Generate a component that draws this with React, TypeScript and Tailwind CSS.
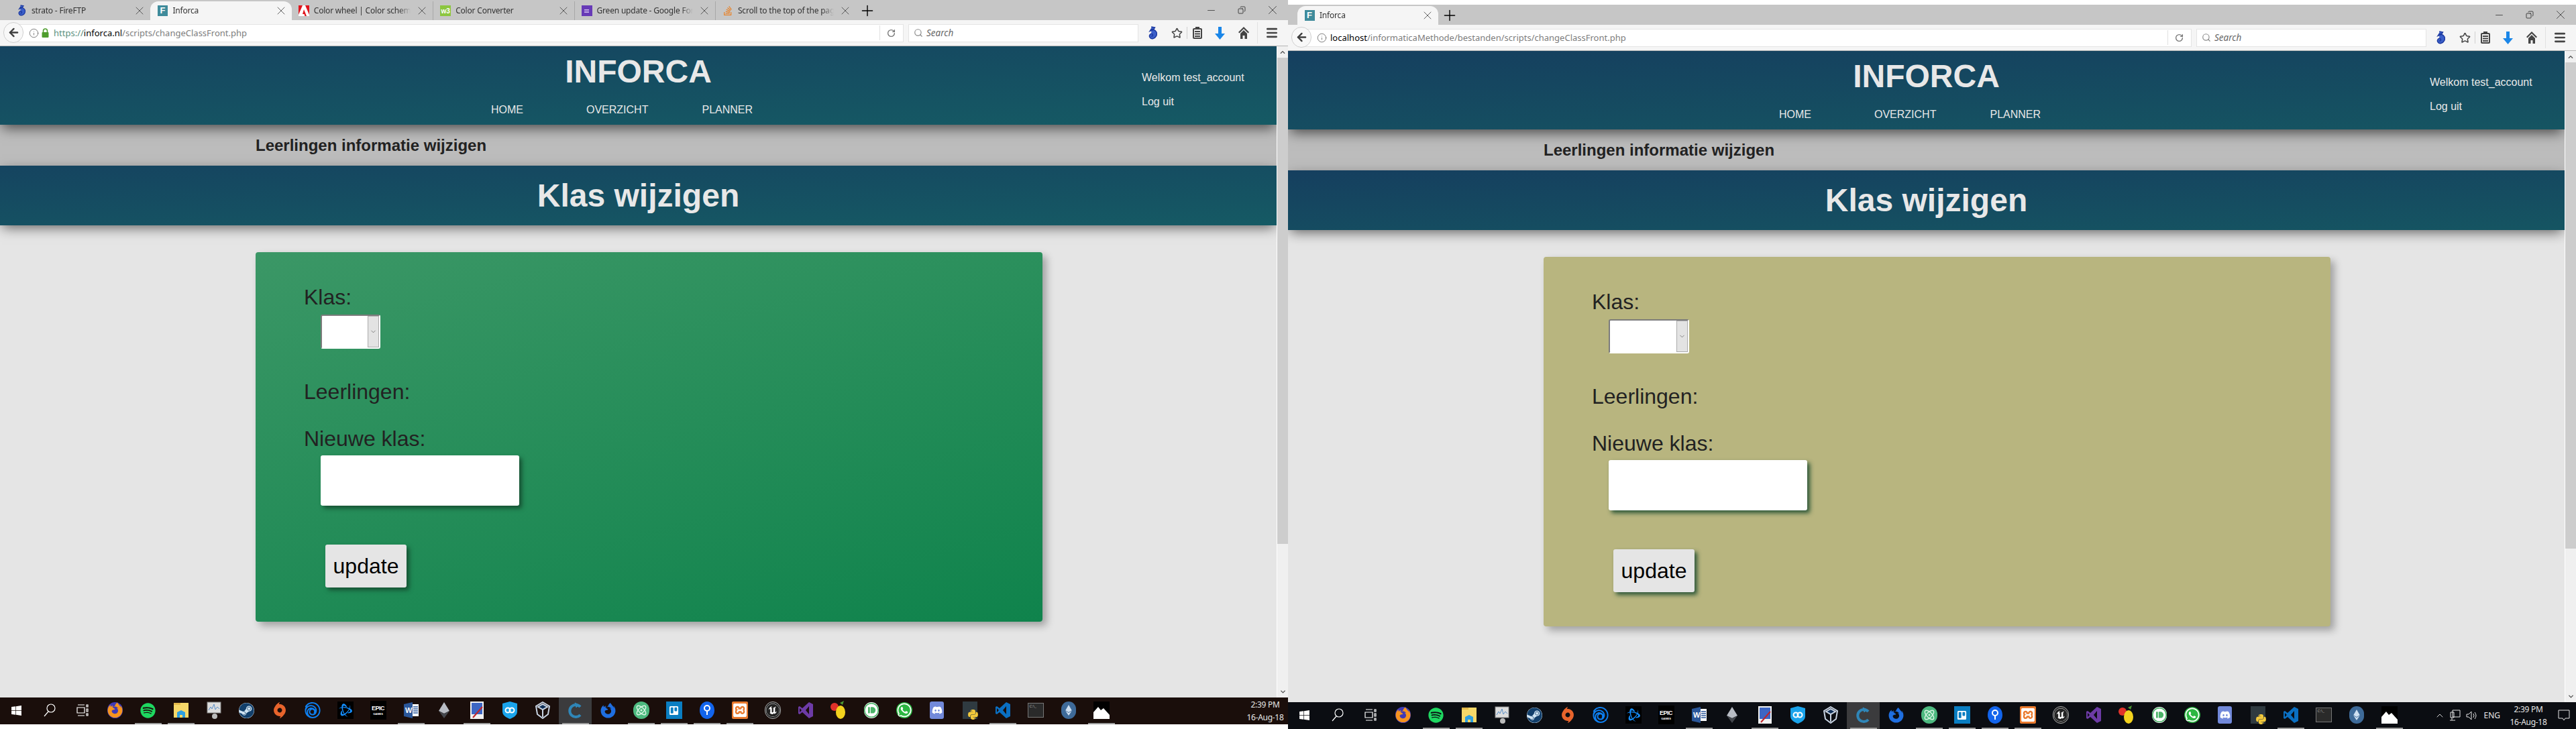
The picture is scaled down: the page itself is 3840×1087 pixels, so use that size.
import type { ReactNode } from "react";
import { ArrowLeft, Atom, ChevronDown, ChevronUp, Copy, Info, Menu, Minus, Plus, RotateCw, Search, Star, X } from "lucide-react";
import {
  FaChevronUp,
  FaDiscord,
  FaEthereum,
  FaFirefoxBrowser,
  FaPython,
  FaSpotify,
  FaStackOverflow,
  FaSteam,
  FaTrello,
  FaWhatsapp,
  FaWindows,
} from "react-icons/fa";
import { SiBattledotnet, SiOrigin, SiPushbullet, SiUbisoft, SiUnrealengine, SiXampp } from "react-icons/si";

function Seahorse({ size = 20 }: { size?: number }) {
  return (
    <svg width={size * 0.7} height={size} viewBox="0 0 14 20">
      <path d="M5 1 L10 2 L8 5 C12 6 14 10 12 14 C10 18 5 19 3 16 C1 13 4 10 6 11 C8 12 7 15 5 14 M8 5 L3 7 L5 4 Z" fill="#3b5fc9" stroke="#1d3aa0" strokeWidth="1.4" />
    </svg>
  );
}

function InforcaIcon() {
  return (
    <span className="w-[15px] h-[16px] bg-[#3f8b9b] text-white text-[13px] font-bold flex items-center justify-center font-['Liberation_Sans',sans-serif]">
      F
    </span>
  );
}

function AdobeIcon() {
  return (
    <svg width="16" height="16" viewBox="0 0 16 16">
      <rect width="16" height="16" fill="#fff" />
      <path d="M0 0h6L0 14zM16 0h-6l6 14zM8 6l4 10H9.5l-1-3H6z" fill="#e0141c" />
    </svg>
  );
}

function TabIcon({ name }: { name: string }) {
  if (name === "seahorse") return <Seahorse size={18} />;
  if (name === "inforca") return <InforcaIcon />;
  if (name === "adobe") return <AdobeIcon />;
  if (name === "w3")
    return (
      <span className="w-[16px] h-[16px] bg-[#8cc63f] text-white text-[10px] font-bold flex items-center justify-center font-['Liberation_Sans',sans-serif]">
        w3
      </span>
    );
  if (name === "forms")
    return (
      <span className="w-[16px] h-[16px] bg-[#673ab7] flex flex-col items-center justify-center gap-[1px]">
        <span className="w-[7px] h-[1px] bg-[#d9c8f2]" />
        <span className="w-[7px] h-[1px] bg-[#d9c8f2]" />
        <span className="w-[7px] h-[1px] bg-[#d9c8f2]" />
      </span>
    );
  return <FaStackOverflow size={16} className="text-[#e8842c]" />;
}

type TabData = { title: string; icon: string; active?: boolean; sep?: boolean };

function Tab({ title, icon, active, sep }: TabData) {
  return (
    <div
      className={`w-[210.4px] h-full flex items-center pl-[10px] pr-[6px] gap-[7px] ${
        active ? "bg-[#f5f5f5] rounded-t-[12px]" : ""
      } ${sep ? "border-l border-[#a8a8a8]" : ""}`}
    >
      <span className="w-[16px] flex justify-center shrink-0">
        <TabIcon name={icon} />
      </span>
      <span className="flex-1 min-w-0 whitespace-nowrap overflow-hidden text-[12px] leading-[18px] text-[#333] tracking-[-0.2px] [mask-image:linear-gradient(to_right,black_88%,transparent_100%)]">
        {title}
      </span>
      <X size={20} strokeWidth={0.9} className="text-[#333] shrink-0" />
    </div>
  );
}

function TabBar({ tabs }: { tabs: TabData[] }) {
  return (
    <div className="h-[30px] bg-[#c6c6c6] flex items-end shrink-0">
      <div className="h-[28px] flex pl-[14px]">
        {tabs.map((t) => (
          <Tab key={t.title} {...t} />
        ))}
      </div>
      <div className="h-[28px] flex items-center ml-[4px] flex-1">
        <Plus size={26} strokeWidth={1.3} className="text-black" />
      </div>
      <div className="h-full flex items-center">
        <span className="w-[46px] flex justify-center">
          <Minus size={17} strokeWidth={1} className="text-[#222]" />
        </span>
        <span className="w-[46px] flex justify-center">
          <Copy size={12} strokeWidth={1.6} className="text-[#222] -scale-x-100" />
        </span>
        <span className="w-[46px] flex justify-center">
          <X size={22} strokeWidth={0.8} className="text-[#222]" />
        </span>
      </div>
    </div>
  );
}

function ClipboardIcon() {
  return (
    <svg width="14" height="18" viewBox="0 0 14 18" fill="none" stroke="#444" strokeWidth="2">
      <rect x="1" y="3" width="12" height="14" rx="1" />
      <path d="M4 1h6M3 7h8M3 10.5h8M3 14h8" />
    </svg>
  );
}

function Toolbar({ url, secure }: { url: ReactNode; secure?: boolean }) {
  return (
    <div className="h-[39px] bg-[#f5f5f5] border-b border-[#b5b5b5] flex items-center shrink-0 relative">
      <div className="ml-[20px] w-[1327px] h-[27px] bg-white border border-[#e4e4e4] flex items-center pl-[22px] pr-[10px]">
        <Info size={15} strokeWidth={1} className="text-[#333] shrink-0 mr-[5px]" />
        {secure && (
          <svg width="11" height="14" viewBox="0 0 11 14" className="shrink-0 mr-[7px] -ml-[1px]">
            <path d="M2.5 6V4a3 3 0 0 1 6 0v2" fill="none" stroke="#4e9d2d" strokeWidth="1.6" />
            <rect x="0.5" y="6" width="10" height="8" rx="1" fill="#4e9d2d" />
          </svg>
        )}
        <span className="flex-1 text-[13px] leading-[18px] text-[#7d7d7d] whitespace-nowrap">{url}</span>
        <span className="h-[22px] border-l border-[#e0e0e0] mr-[10px]" />
        <RotateCw size={13} strokeWidth={2.5} className="text-[#777] mr-[1px]" />
      </div>
      {/* the back button sits over the start of the url bar */}
      <span className="absolute left-[5px] top-[3px] w-[30px] h-[31px] rounded-full bg-[#f8f8f8] border border-[#cfcfcf] flex items-center justify-center">
        <ArrowLeft size={19} strokeWidth={3} className="text-[#3e3e3e]" />
      </span>
      <div className="ml-[7px] w-[343px] h-[27px] bg-white border border-[#e4e4e4] flex items-center pl-[7px] gap-[5px]">
        <Search size={14} strokeWidth={2} className="text-[#8a8a8a]" />
        <span className="text-[13.5px] italic leading-[18px] text-[#666]">Search</span>
      </div>
      <span className="w-[42px] flex justify-center">
        <Seahorse size={21} />
      </span>
      <span className="w-[30px] flex justify-center">
        <Star size={17} strokeWidth={2.2} className="text-[#444]" />
      </span>
      <span className="h-[18px] border-l border-[#d0d0d0]" />
      <span className="w-[30px] flex justify-center">
        <ClipboardIcon />
      </span>
      <span className="w-[36px] flex justify-center">
        <svg width="15" height="19" viewBox="0 0 15 19" fill="#1a86e8">
          <path d="M5 0h5v10h5l-7.5 9L0 10h5z" />
        </svg>
      </span>
      <span className="w-[36px] flex justify-center">
        <svg width="16" height="18" viewBox="0 0 16 18" fill="#444">
          <path d="M8 0l8 8-1.5 1.5L8 3 1.5 9.500 0 8zM8 5l5 5v8H9.500v-5h-3v5H3v-8z" />
        </svg>
      </span>
      <span className="h-[32px] border-l border-[#e2e2e2] ml-[2px]" />
      <span className="w-[42px] flex justify-center">
        <Menu size={20} strokeWidth={3.2} className="text-[#444]" />
      </span>
    </div>
  );
}

function Scrollbar() {
  return (
    <div className="w-[17px] bg-[#f0f0f0] flex flex-col items-center shrink-0 border-l border-white">
      <span className="h-[17px] flex items-center justify-center">
        <FaChevronUp size={8} className="text-[#505050]" />
      </span>
      <div className="w-[16px] h-[725px] bg-[#cdcdcd]" />
      <div className="flex-1" />
      <span className="h-[17px] flex items-center justify-center">
        <ChevronDown size={11} strokeWidth={3} className="text-[#505050]" />
      </span>
    </div>
  );
}

function SelectBox({ width }: { width: string }) {
  return (
    <div className={`${width} h-[51px] ml-[25px] mt-[7px] bg-white rounded-[3px] border-2 border-t-[#7c7c7c] border-l-[#7c7c7c] border-r-white border-b-white flex justify-end`}>
      <div className="w-[17px] h-full bg-[#e3e3e3] border border-[#ababab] flex items-center justify-center">
        <ChevronDown size={11} strokeWidth={1.2} className="text-[#333]" />
      </div>
    </div>
  );
}

type PageProps = {
  card: string;
  selectWidth: string;
  gradient: string;
};

function Page({ card, selectWidth, gradient }: PageProps) {
  return (
    <div className="flex-1 flex min-h-0">
      <div className="flex-1 min-w-0 bg-[#e5e5e5] overflow-hidden font-['Liberation_Sans',Arial,sans-serif]">
        <header className={`relative z-20 h-[117px] ${gradient} shadow-[0_8px_18px_-3px_rgba(0,0,0,0.6)] grid grid-cols-[1fr_501px_1fr] text-[#e8e8e8]`}>
          <div />
          <div className="flex flex-col">
            <h1 className="text-[48px] leading-[55px] font-bold text-center mt-[10px]">INFORCA</h1>
            <nav className="flex text-[16px] leading-[18px] pl-[31px] mt-[21px]">
              <span>HOME</span>
              <span className="ml-[94px]">OVERZICHT</span>
              <span className="ml-[80px]">PLANNER</span>
            </nav>
          </div>
          <div className="pl-[500px] pt-[38px] text-[16px] leading-[18px] whitespace-nowrap">
            <p>Welkom test_account</p>
            <p className="mt-[18px]">Log uit</p>
          </div>
        </header>
        <div className="h-[61px] bg-[#bcbcbc] pl-[381px] flex items-center text-[24px] font-bold text-[#222]">Leerlingen informatie wijzigen</div>
        <div className={`relative z-10 h-[89px] ${gradient} shadow-[0_6px_18px_-3px_rgba(0,0,0,0.6)] flex items-center justify-center text-[48px] font-bold text-[#e8e8e8]`}>
          Klas wijzigen
        </div>
        <section className={`ml-[381px] mt-[40px] w-[1173px] h-[551px] rounded-[4px] ${card} shadow-[6px_6px_12px_rgba(0,0,0,0.3)] pt-[49px] pl-[72px] text-[32px] leading-[37px] text-[#222]`}>
          <p>Klas:</p>
          <SelectBox width={selectWidth} />
          <p className="mt-[46px]">Leerlingen:</p>
          <p className="mt-[33px]">Nieuwe klas:</p>
          <input
            type="text"
            aria-label="Nieuwe klas"
            className="block w-[296px] h-[75px] ml-[25px] mt-[6px] bg-white rounded-[3px] shadow-[4px_4px_6px_rgba(20,70,45,0.85)] outline-none"
          />
          <button
            type="button"
            className="block w-[121px] h-[64px] ml-[32px] mt-[58px] bg-[#e5e5e5] rounded-[3px] text-black shadow-[4px_4px_6px_rgba(20,70,45,0.85)]"
          >
            update
          </button>
        </section>
      </div>
      <Scrollbar />
    </div>
  );
}

function WordIcon() {
  return (
    <svg width="24" height="24" viewBox="0 0 24 24">
      <path d="M1 3l13-3v24L1 21z" fill="#2b579a" />
      <rect x="14" y="3" width="9" height="18" fill="#fff" />
      <path d="M15 7h7M15 10h7M15 13h7M15 16h7" stroke="#2b579a" strokeWidth="1.5" />
      <text x="3" y="16" fontSize="11" fontWeight="700" fill="#fff" fontFamily="Liberation Sans">W</text>
    </svg>
  );
}

function VsIcon({ color }: { color: string }) {
  return (
    <svg width="24" height="26" viewBox="0 0 24 26" fill={color}>
      <path fillRule="evenodd" d="M17 1l6 3v18l-6 3L7 16l-4 3-2-1V8l2-1 4 3zM17 7l-5 6 5 6zM3 10v6l3-3z" />
    </svg>
  );
}

const tasks: { key: string; el: ReactNode; on?: boolean; active?: boolean }[] = [
  { key: "start", el: <FaWindows size={17} className="text-white" /> },
  {
    key: "search",
    el: (
      <svg width="18" height="20" viewBox="0 0 18 20" fill="none" stroke="#fff" strokeWidth="1.2">
        <circle cx="11" cy="7" r="6" />
        <path d="M7 12l-6 7" />
      </svg>
    ),
  },
  {
    key: "taskview",
    el: (
      <svg width="18" height="18" viewBox="0 0 18 18" fill="none" stroke="#fff" strokeWidth="1.2">
        <path d="M2 1h10M2 17h10M1 5h11v8H1zM15 1h2v3h-2zM15 7h2v4h-2zM15 14h2v3h-2z" />
      </svg>
    ),
  },
  {
    key: "firefox",
    el: (
      <span className="w-[23px] h-[24px] rounded-full bg-[#3f3ab5] flex items-center justify-center">
        <FaFirefoxBrowser size={24} className="text-[#f7941e]" />
      </span>
    ),
  },
  { key: "spotify", el: <FaSpotify size={23} className="text-[#1ed760]" />, on: true },
  {
    key: "files",
    el: (
      <svg width="22" height="24" viewBox="0 0 22 24">
        <rect x="0" y="1" width="22" height="22" fill="#f6d869" />
        <rect x="0" y="1" width="10" height="3" fill="#e3b84a" />
        <path d="M5 23v-8l6-3 6 3v8h-4v-4H9v4z" fill="#2d9fe0" />
      </svg>
    ),
    on: true,
  },
  {
    key: "perf",
    el: (
      <svg width="22" height="26" viewBox="0 0 22 26">
        <rect x="1" y="1" width="20" height="16" fill="#ddd" stroke="#888" />
        <path d="M3 13l3-5 2 3 3-7 2 8 3-4 3 3" stroke="#5b8fc7" fill="none" />
        <circle cx="12" cy="22" r="4" fill="#bbb" />
      </svg>
    ),
  },
  { key: "steam", el: <FaSteam size={23} className="text-[#123f6b] bg-[#cfe3f2] rounded-full" /> },
  { key: "origin", el: <SiOrigin size={24} className="text-[#e8642c]" /> },
  { key: "uplay", el: <SiUbisoft size={24} className="text-[#0e7ff0]" /> },
  {
    key: "battle",
    el: (
      <span className="w-[24px] h-[26px] bg-black flex items-center justify-center">
        <SiBattledotnet size={20} className="text-[#148eff]" />
      </span>
    ),
  },
  {
    key: "epic",
    el: (
      <span className="w-[24px] h-[28px] bg-black flex flex-col items-center justify-center text-white font-['Liberation_Sans',sans-serif] font-bold">
        <span className="text-[9px] leading-[11px] tracking-[-0.5px]">EPIC</span>
        <span className="text-[4px] leading-[6px]">GAMES</span>
      </span>
    ),
  },
  { key: "word", el: <WordIcon />, on: true },
  {
    key: "launcher",
    el: (
      <svg width="20" height="24" viewBox="0 0 20 24">
        <path d="M10 0l8 13-8 4-8-4z" fill="#b8bcc4" />
        <path d="M10 17l8-4-8 11-8-11z" fill="#44474d" />
      </svg>
    ),
  },
  {
    key: "paint",
    el: (
      <svg width="20" height="26" viewBox="0 0 20 26">
        <rect width="20" height="26" fill="#f1f1f1" />
        <rect x="2" y="2" width="16" height="17" fill="#3c66c4" />
        <path d="M4 24L18 8" stroke="#c0262b" strokeWidth="2" />
      </svg>
    ),
    on: true,
  },
  {
    key: "shield",
    el: (
      <svg width="22" height="26" viewBox="0 0 22 26">
        <path d="M0 3l11-3 11 3v12c0 6-6 9-11 11C6 24 0 21 0 15z" fill="#1aa4ec" />
        <circle cx="8" cy="13" r="3.5" fill="none" stroke="#fff" strokeWidth="2" />
        <circle cx="14" cy="13" r="3.5" fill="none" stroke="#fff" strokeWidth="2" />
      </svg>
    ),
  },
  {
    key: "vbox",
    el: (
      <svg width="22" height="26" viewBox="0 0 22 26" fill="none" stroke="#c9d4e3" strokeWidth="2">
        <path d="M11 1l10 6-2 12-8 6-8-6L1 7z" />
        <path d="M4 8l7-4 7 4-7 4z" fill="#0f2f58" />
        <path d="M11 12v11" />
      </svg>
    ),
  },
  {
    key: "active",
    el: (
      <svg width="22" height="26" viewBox="0 0 22 26" fill="none" stroke="#2f86b8" strokeWidth="4">
        <path d="M18 8a9 9 0 1 0 0 12" />
        <path d="M10 2l6 3-4 4z" fill="#2f86b8" strokeWidth="1" />
      </svg>
    ),
    active: true,
    on: true,
  },
  { key: "fxdev", el: <FaFirefoxBrowser size={23} className="text-[#1f6ee0]" /> },
  {
    key: "atom",
    el: (
      <span className="w-[24px] h-[26px] rounded-full bg-[#4cb97f] flex items-center justify-center">
        <Atom size={18} className="text-[#d5f3e0]" />
      </span>
    ),
    on: true,
  },
  {
    key: "trello",
    el: (
      <span className="w-[24px] h-[26px] bg-[#0a7ec2] flex items-center justify-center">
        <FaTrello size={15} className="text-white" />
      </span>
    ),
    on: true,
  },
  {
    key: "sourcetree",
    el: (
      <svg width="22" height="26" viewBox="0 0 22 26">
        <ellipse cx="11" cy="13" rx="11" ry="13" fill="#1264ec" />
        <circle cx="11" cy="10" r="4" fill="none" stroke="#fff" strokeWidth="2" />
        <path d="M11 14v6" stroke="#fff" strokeWidth="2" />
      </svg>
    ),
    on: true,
  },
  {
    key: "xampp",
    el: (
      <span className="w-[24px] h-[26px] rounded-[2px] bg-[#ea7a2e] flex items-center justify-center">
        <SiXampp size={20} className="text-white" />
      </span>
    ),
    on: true,
  },
  {
    key: "unreal",
    el: (
      <span className="w-[24px] h-[26px] rounded-full bg-[#222] border border-[#aaa] flex items-center justify-center">
        <SiUnrealengine size={20} className="text-white" />
      </span>
    ),
  },
  { key: "vs", el: <VsIcon color="#6d3ba6" /> },
  {
    key: "fruit",
    el: (
      <svg width="24" height="28" viewBox="0 0 24 28">
        <circle cx="6" cy="9" r="6" fill="#e0322a" />
        <path d="M14 3l6-3-2 6z" fill="#4c9a32" />
        <ellipse cx="15" cy="17" rx="7" ry="10" fill="#f3d21e" />
      </svg>
    ),
  },
  {
    key: "pushbullet",
    el: (
      <span className="w-[22px] h-[24px] rounded-full bg-white flex items-center justify-center">
        <SiPushbullet size={24} className="text-[#4ab367]" />
      </span>
    ),
  },
  { key: "whatsapp", el: <FaWhatsapp size={24} className="text-white bg-[#2cb742] rounded-full" /> },
  {
    key: "discord",
    el: (
      <span className="w-[21px] h-[26px] rounded-[3px] bg-[#7289da] flex items-center justify-center">
        <FaDiscord size={16} className="text-white" />
      </span>
    ),
  },
  {
    key: "pycharm",
    el: (
      <span className="relative w-[22px] h-[26px] bg-[#2f3a40]">
        <FaPython size={17} className="absolute -right-[2px] -bottom-[2px] text-[#f4c93b]" />
      </span>
    ),
  },
  { key: "vscode", el: <VsIcon color="#0a6fc2" />, on: true },
  {
    key: "console",
    el: (
      <span className="w-[24px] h-[22px] bg-[#2a2a2a] border border-[#777] text-[6px] leading-[9px] text-[#aaa] pl-[2px]">C:\_</span>
    ),
  },
  {
    key: "eth",
    el: (
      <span className="w-[22px] h-[26px] rounded-full bg-[#3e6a99] flex items-center justify-center">
        <FaEthereum size={16} className="text-[#cfe0f2]" />
      </span>
    ),
  },
  {
    key: "photo",
    el: (
      <svg width="24" height="26" viewBox="0 0 24 26">
        <rect width="24" height="26" fill="#000" />
        <path d="M0 26V16l7-8 4 5 4-3 9 10v6z" fill="#fff" />
      </svg>
    ),
    on: true,
  },
];

function Clock({ className }: { className: string }) {
  return (
    <div className={`flex flex-col items-center justify-center gap-[4px] w-[58px] text-[12px] leading-[15px] text-[#e6e6e6] tracking-[-0.3px] font-['Noto_Sans',sans-serif] ${className}`}>
      <span>2:39 PM</span>
      <span className="whitespace-nowrap">16-Aug-18</span>
    </div>
  );
}

function Taskbar({ bg, tray }: { bg: string; tray: boolean }) {
  return (
    <div className={`h-[40px] ${bg} flex shrink-0 overflow-hidden`}>
      {tasks.map((t) => (
        <div key={t.key} className={`w-[49px] h-full shrink-0 flex flex-col items-center ${t.active ? "bg-[#3b3b3d]" : ""}`}>
          <div className="flex-1 flex items-center justify-center min-h-0">{t.el}</div>
          <span className={`w-[40px] h-[2px] ${t.on ? "bg-[#9c9c9c]" : ""}`} />
        </div>
      ))}
      <div className="flex-1" />
      {tray && (
        <div className="flex items-center text-[#e6e6e6] mr-[9px]">
          <ChevronUp size={16} strokeWidth={1.4} />
          <svg width="16" height="18" viewBox="0 0 16 18" fill="none" stroke="#e6e6e6" className="ml-[7px]">
            <path d="M4 1h11v10H4zM1 4h5v8H1zM3 12v4M0 16h8" />
          </svg>
          <svg width="16" height="16" viewBox="0 0 16 16" fill="none" stroke="#e6e6e6" className="ml-[8px]">
            <path d="M1 6h3l4-4v12l-4-4H1zM11 5q2 3 0 6M13 3q4 5 0 10" />
          </svg>
          <span className="ml-[10px] text-[12px] font-['Noto_Sans',sans-serif]">ENG</span>
          <Clock className="ml-[13px]" />
          <svg width="18" height="18" viewBox="0 0 18 18" fill="none" stroke="#e6e6e6" className="ml-[15px]">
            <path d="M1 1h16v12h-6l-2 3-2-3H1z" />
          </svg>
        </div>
      )}
      {!tray && <Clock className="mr-[5px]" />}
    </div>
  );
}

const leftTabs: TabData[] = [
  { title: "strato - FireFTP", icon: "seahorse" },
  { title: "Inforca", icon: "inforca", active: true },
  { title: "Color wheel | Color schemes", icon: "adobe" },
  { title: "Color Converter", icon: "w3", sep: true },
  { title: "Green update - Google Forms", icon: "forms", sep: true },
  { title: "Scroll to the top of the page", icon: "so", sep: true },
];

export default function App() {
  return (
    <div className="w-[3840px] h-[1087px] bg-white flex overflow-hidden font-['Noto_Sans',sans-serif]">
      <div className="w-[1920px] h-[1080px] flex flex-col shrink-0">
        <TabBar tabs={leftTabs} />
        <Toolbar
          secure
          url={
            <>
              <span className="text-[#5b8f7d]">https://</span>
              <span className="text-black">inforca.nl</span>/scripts/changeClassFront.php
            </>
          }
        />
        <Page
          card="bg-[linear-gradient(165deg,#3b9766_0%,#0f834c_100%)]"
          selectWidth="w-[89px]"
          gradient="bg-[linear-gradient(178deg,#154460_0%,#155a64_100%)]"
        />
        <Taskbar bg="bg-[#1a0e0b]" tray={false} />
      </div>
      <div className="w-[1920px] h-[1080px] mt-[7px] flex flex-col shrink-0">
        <TabBar tabs={[{ title: "Inforca", icon: "inforca", active: true }]} />
        <Toolbar
          url={
            <>
              <span className="text-black">localhost</span>/informaticaMethode/bestanden/scripts/changeClassFront.php
            </>
          }
        />
        <Page card="bg-[#b8b57f]" selectWidth="w-[120px]" gradient="bg-[linear-gradient(178deg,#153f5f_0%,#155562_100%)]" />
        <Taskbar bg="bg-[#0b0d12]" tray />
      </div>
    </div>
  );
}
